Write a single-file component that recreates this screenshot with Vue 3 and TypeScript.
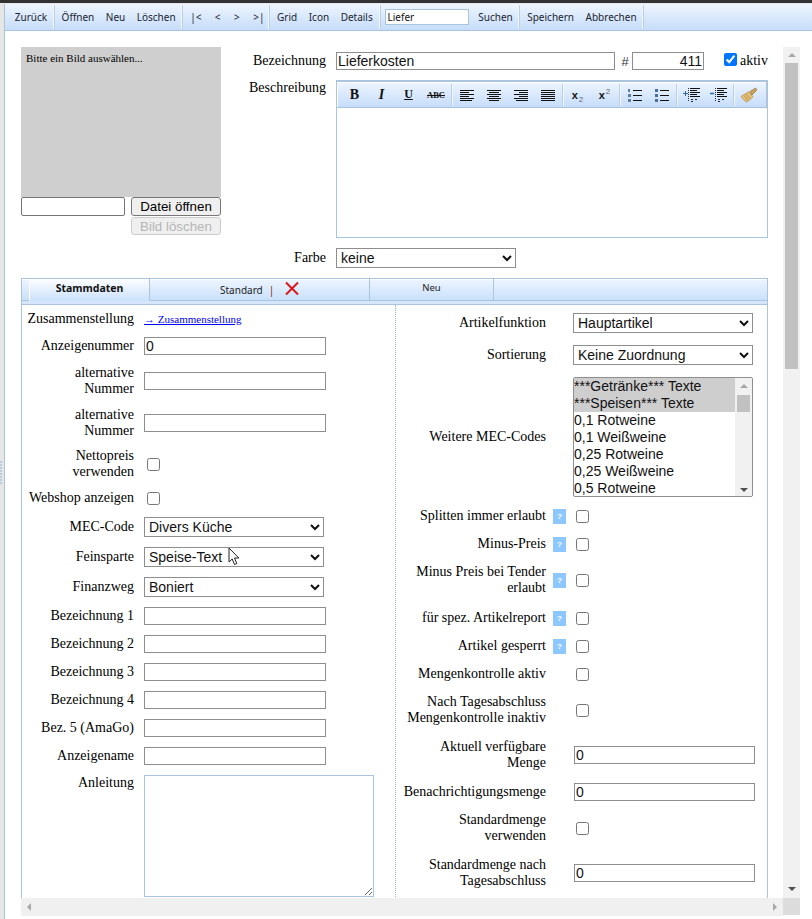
<script setup lang="ts">
interface LeftRow { label: string; kind: string; h: number; value?: string }
interface RightRow { label: string; kind: string; h: number; value?: string; help?: boolean }

const toolbarGroups: string[][] = [
  ['Zurück'],
  ['Öffnen', 'Neu', 'Löschen'],
  ['|<', '<', '>', '>|'],
  ['Grid', 'Icon', 'Details'],
]

const leftRows: LeftRow[] = [
  { label: 'Zusammenstellung', kind: 'link', h: 27 },
  { label: 'Anzeigenummer', kind: 'input', h: 28, value: '0' },
  { label: 'alternative Nummer', kind: 'input', h: 42 },
  { label: 'alternative Nummer', kind: 'input', h: 42 },
  { label: 'Nettopreis verwenden', kind: 'check', h: 40 },
  { label: 'Webshop anzeigen', kind: 'check', h: 28 },
  { label: 'MEC-Code', kind: 'select', h: 30, value: 'Divers Küche' },
  { label: 'Feinsparte', kind: 'select', h: 30, value: 'Speise-Text' },
  { label: 'Finanzweg', kind: 'select', h: 30, value: 'Boniert' },
  { label: 'Bezeichnung 1', kind: 'input', h: 28 },
  { label: 'Bezeichnung 2', kind: 'input', h: 28 },
  { label: 'Bezeichnung 3', kind: 'input', h: 28 },
  { label: 'Bezeichnung 4', kind: 'input', h: 28 },
  { label: 'Bez. 5 (AmaGo)', kind: 'input', h: 28 },
  { label: 'Anzeigename', kind: 'input', h: 28 },
]

const rightRows: RightRow[] = [
  { label: 'Artikelfunktion', kind: 'select', h: 26, value: 'Hauptartikel' },
  { label: 'Sortierung', kind: 'select', h: 38, value: 'Keine Zuordnung' },
  { label: 'Weitere MEC-Codes', kind: 'list', h: 126 },
  { label: 'Splitten immer erlaubt', kind: 'check', h: 32, help: true },
  { label: 'Minus-Preis', kind: 'check', h: 24, help: true },
  { label: 'Minus Preis bei Tender erlaubt', kind: 'check', h: 48, help: true },
  { label: 'für spez. Artikelreport', kind: 'check', h: 28, help: true },
  { label: 'Artikel gesperrt', kind: 'check', h: 28, help: true },
  { label: 'Mengenkontrolle aktiv', kind: 'check', h: 28 },
  { label: 'Nach Tagesabschluss Mengenkontrolle inaktiv', kind: 'check', h: 44 },
  { label: 'Aktuell verfügbare Menge', kind: 'input', h: 46, value: '0' },
  { label: 'Benachrichtigungsmenge', kind: 'input', h: 28, value: '0' },
  { label: 'Standardmenge verwenden', kind: 'check', h: 44 },
  { label: 'Standardmenge nach Tagesabschluss', kind: 'input', h: 46, value: '0' },
]

const listItems = ['***Getränke*** Texte', '***Speisen*** Texte', '0,1 Rotweine', '0,1 Weißweine', '0,25 Rotweine', '0,25 Weißweine', '0,5 Rotweine']
</script>

<template>
  <div class="page">
    <div class="topstrip"></div>
    <div class="shell">
      <div class="rail"><div class="grip"></div></div>
      <main class="main">
        <nav class="toolbar">
          <template v-for="(group, gi) in toolbarGroups" :key="group[0]">
            <span class="group" :class="{ navgroup: gi === 2 }">
              <a v-for="item in group" :key="item" class="tool">{{ item }}</a>
            </span>
            <i class="sep"></i>
          </template>
          <input class="search" value="Liefer" />
          <a class="tool">Suchen</a>
          <i class="sep"></i>
          <a class="tool">Speichern</a>
          <a class="tool">Abbrechen</a>
          <i class="sep"></i>
        </nav>

        <div class="scrollarea">
          <div class="viewrow">
            <div class="content">
              <section class="head">
                <div class="imagecol">
                  <div class="imagebox">Bitte ein Bild auswählen...</div>
                  <div class="filerow">
                    <input class="filename" />
                    <div class="filebtns">
                      <button class="btn">Datei öffnen</button>
                      <button class="btn" disabled>Bild löschen</button>
                    </div>
                  </div>
                </div>
                <div class="headform">
                  <div class="hrow first">
                    <label class="hlabel">Bezeichnung</label>
                    <input class="field name" value="Lieferkosten" />
                    <span class="hash">#</span>
                    <input class="field num" value="411" />
                    <label class="aktiv"><input type="checkbox" class="cb" checked /><span>aktiv</span></label>
                  </div>
                  <div class="hrow second">
                    <label class="hlabel">Beschreibung</label>
                    <div class="editor">
                      <div class="edbar">
                        <span class="ed b">B</span>
                        <span class="ed i">I</span>
                        <span class="ed u">U</span>
                        <span class="ed abc">ABC</span>
                        <i class="edsep"></i>
                        <span class="ed" v-for="(n, a) in 4" :key="a">
                          <svg width="16" height="12" viewBox="0 0 16 12">
                            <path v-if="a===0" d="M1 1.500h14M1 3.500h9M1 5.500h14M1 7.500h9M1 9.500h14M1 11.500h12" stroke="#111" fill="none"/>
                            <path v-if="a===1" d="M1 1.500h14M3 3.500h10M1 5.500h14M3 7.500h10M1 9.500h14M3 11.500h10" stroke="#111" fill="none"/>
                            <path v-if="a===2" d="M1 1.500h14M6 3.500h9M1 5.500h14M6 7.500h9M1 9.500h14M3 11.500h12" stroke="#111" fill="none"/>
                            <path v-if="a===3" d="M1 1.500h14M1 3.500h14M1 5.500h14M1 7.500h14M1 9.500h14M1 11.500h14" stroke="#111" fill="none"/>
                          </svg>
                        </span>
                        <i class="edsep"></i>
                        <span class="ed sc"><b>x</b><sub>2</sub></span>
                        <span class="ed sc"><b>x</b><sup>2</sup></span>
                        <i class="edsep"></i>
                        <span class="ed">
                          <svg width="16" height="14" viewBox="0 0 16 14">
                            <path d="M6 2.500h9M6 7.500h9M6 12.500h9" stroke="#111" fill="none"/>
                            <path d="M1 1h2v3H1zM1 6h3v3H1zM1 11h3v3H1z" fill="#5b7fa6"/>
                          </svg>
                        </span>
                        <span class="ed">
                          <svg width="16" height="14" viewBox="0 0 16 14">
                            <path d="M6 2.500h9M6 7.500h9M6 12.500h9" stroke="#111" fill="none"/>
                            <path d="M1 1h3v3H1zM1 6h3v3H1zM1 11h3v3H1z" fill="#4a6f9c"/>
                          </svg>
                        </span>
                        <i class="edsep"></i>
                        <span class="ed">
                          <svg width="18" height="14" viewBox="0 0 18 14">
                            <path d="M7 .500h10M7 2.500h7M7 4.500h10M7 6.500h7M7 8.500h10" stroke="#111" fill="none"/>
                            <path d="M8 11.500h2M12 11.500h2M8 13.500h2" stroke="#222" fill="none"/>
                            <path d="M0 5.500h5M2.500 3v5" stroke="#2f6aa8" fill="none"/>
                            <path d="M5.500 0v14" stroke="#333" stroke-dasharray="1 1" fill="none"/>
                          </svg>
                        </span>
                        <span class="ed">
                          <svg width="18" height="14" viewBox="0 0 18 14">
                            <path d="M7 .500h10M7 2.500h7M7 4.500h10M7 6.500h7M7 8.500h10" stroke="#111" fill="none"/>
                            <path d="M8 11.500h2M12 11.500h2M8 13.500h2" stroke="#222" fill="none"/>
                            <path d="M0 5.500h4" stroke="#2f6aa8" stroke-width="1.500" fill="none"/>
                            <path d="M5.500 0v14" stroke="#333" stroke-dasharray="1 1" fill="none"/>
                          </svg>
                        </span>
                        <i class="edsep"></i>
                        <span class="ed">
                          <svg width="18" height="16" viewBox="0 0 18 16">
                            <path d="M1 9.500 9 4.500l4 5.500-6 5c-2-.5-4.500-3-6-5.500z" fill="#e2c078" stroke="#b98f45" stroke-width=".7"/>
                            <path d="M10 4.500 15.500 1l1.500 2-5 5z" fill="#c9a35b" stroke="#8c6a2e" stroke-width=".6"/>
                            <path d="M4 8.500l4 5M6 7l4 5" stroke="#a97f3a" stroke-width=".7"/>
                          </svg>
                        </span>
                      </div>
                      <div class="edbody"></div>
                    </div>
                  </div>
                  <div class="hrow third">
                    <label class="hlabel">Farbe</label>
                    <select class="sel color"><option>keine</option></select>
                  </div>
                </div>
              </section>

              <section class="tabs">
                <div class="tabbar">
                  <div class="tab active">Stammdaten</div>
                  <div class="tab std">
                    <span class="stdtext">Standard</span><span class="pipe">|</span>
                    <svg class="del" width="16" height="15" viewBox="0 0 16 15"><path d="M2 1.500 14 13.500M14 1.500 2 13.500" stroke="#d81717" stroke-width="2" fill="none"/></svg>
                  </div>
                  <div class="tab neu">Neu</div>
                </div>
                <div class="tabstrip"></div>
                <div class="panes">
                  <div class="pane leftpane">
                    <div v-for="(r, idx) in leftRows" :key="idx" class="lrow" :style="{ height: r.h + 'px' }">
                      <label class="llabel">{{ r.label }}</label>
                      <a v-if="r.kind==='link'" class="link">→ Zusammenstellung</a>
                      <input v-else-if="r.kind==='input'" class="field lfield" :value="r.value" />
                      <input v-else-if="r.kind==='check'" type="checkbox" class="cb lcb" />
                      <select v-else class="sel lsel"><option>{{ r.value }}</option></select>
                    </div>
                    <div class="anleitung">
                      <label class="llabel top">Anleitung</label>
                      <textarea class="notes"></textarea>
                    </div>
                  </div>
                  <div class="pane rightpane">
                    <div v-for="(r, idx) in rightRows" :key="idx" class="rrow" :style="{ height: r.h + 'px' }">
                      <label class="rlabel">{{ r.label }}</label>
                      <span class="helpslot"><span v-if="r.help" class="help">?</span></span>
                      <select v-if="r.kind==='select'" class="sel rsel"><option>{{ r.value }}</option></select>
                      <input v-else-if="r.kind==='input'" class="field rfield" :value="r.value" />
                      <input v-else-if="r.kind==='check'" type="checkbox" class="cb rcb" />
                      <div v-else class="listbox">
                        <div class="listitems">
                          <div v-for="(it, li) in listItems" :key="it" class="li" :class="{ sel2: li < 2 }">{{ it }}</div>
                        </div>
                        <div class="listscroll">
                          <span class="arrow up small"></span>
                          <span class="lthumb"></span>
                          <span class="arrow down small"></span>
                        </div>
                      </div>
                    </div>
                  </div>
                </div>
              </section>
            </div>
            <div class="vscroll">
              <span class="arrow up"></span>
              <span class="vthumb"></span>
              <span class="arrow down dark"></span>
            </div>
          </div>
          <div class="hscroll">
            <div class="htrack">
              <span class="arrow left"></span>
              <span class="arrow right"></span>
            </div>
            <div class="corner"></div>
          </div>
        </div>
      </main>
    </div>

    <svg class="cursor" width="14" height="20" viewBox="0 0 14 20">
      <path d="M1 1v14l3.200-3 2.300 5.500 2.300-1-2.300-5.500h4.300z" fill="#fff" stroke="#222" stroke-width="1"/>
    </svg>
  </div>
</template>

<style>
html, body { margin: 0; padding: 0; background: #fff; }
</style>

<style scoped>
.page { position: relative; width: 812px; height: 919px; overflow: hidden; background: #fff; display: flex; flex-direction: column; font-family: "Liberation Serif", serif; font-size: 14px; color: #000; }
.topstrip { height: 3px; background: #333; border-bottom: 1px solid #e6e6e6; flex: none; }
.shell { flex: 1; display: flex; min-height: 0; }
.rail { width: 4px; background: #e6e6e6; flex: none; position: relative; }
.grip { position: absolute; left: 0; top: 456px; width: 3px; height: 24px; background: linear-gradient(#e6e6e6 1px, transparent 1px) 0 0 / 3px 3px, linear-gradient(to right, #bccde0 2px, transparent 2px) 0 0 / 3px 3px; }
.main { flex: 1; min-width: 0; border-left: 1px solid #a9c4dc; display: flex; flex-direction: column; }

.toolbar { height: 26px; flex: none; display: flex; align-items: center; padding-left: 4px; background: linear-gradient(#eef5fe, #c6ddfa); border-bottom: 1px solid #a9c4dc; font-family: "Noto Sans", sans-serif; font-size: 10px; color: #1c2430; box-sizing: content-box; }
.group { display: flex; }
.navgroup { margin: 0 -3px 0 -1px; }
.tool { padding: 0 5.750px; white-space: nowrap; }
.navgroup .tool { padding: 0 6.750px; }
.sep { width: 1px; height: 24px; background: #f4f8fe; border-right: 1px solid #b9cfe8; margin: 0 1px 0 0; flex: none; }
.search { width: 84px; height: 16px; box-sizing: border-box; margin: 0 4px 0 3px; border: 1px solid #a9c4dc; padding: 0 2px; font: 10px "Noto Sans", sans-serif; color: #111; outline: none; }

.scrollarea { margin: 16px 12px 0 16px; display: flex; flex-direction: column; flex: none; height: 869px; }
.viewrow { display: flex; height: 851px; flex: none; }
.content { width: 762px; flex: none; overflow: hidden; display: flex; flex-direction: column; }

.head { display: flex; flex: none; }
.imagecol { width: 200px; flex: none; }
.imagebox { height: 150px; background: #cfcfcf; font-size: 11px; padding: 4px 5px; box-sizing: border-box; line-height: 14px; }
.filerow { display: flex; gap: 6px; }
.filename { width: 104px; height: 19px; box-sizing: border-box; border: 1px solid #767676; border-radius: 2px; padding: 0; }
.filebtns { width: 90px; display: flex; flex-direction: column; gap: 1px; }
.btn { height: 19px; width: 90px; padding: 0; box-sizing: border-box; border: 1px solid #767676; border-radius: 3px; background: #efefef; font: 13.330px "Liberation Sans", sans-serif; color: #000; }
.btn:disabled { height: 18px; border-color: #ccc; color: #b5b5b5; }

.headform { width: 547px; flex: none; }
.hrow { display: flex; }
.hrow.first { margin-top: 5px; height: 18px; align-items: center; }
.hrow.second { margin-top: 10px; }
.hrow.third { margin-top: 10px; align-items: center; }
.hlabel { width: 105px; text-align: right; flex: none; margin-right: 10px; font-size: 14px; }
.second .hlabel { line-height: 16px; }
.field { box-sizing: border-box; height: 18px; border: 1px solid #8e8e8e; padding: 0 1px; font: 14px "Liberation Sans", sans-serif; color: #111; outline: none; border-radius: 0; }
.name { width: 279px; }
.hash { width: 17px; padding-left: 3px; box-sizing: border-box; text-align: center; font: 13px "Liberation Sans", sans-serif; color: #333; }
.num { width: 72px; text-align: right; }
.aktiv { display: flex; align-items: center; margin-left: 20px; margin-top: -3px; font-size: 14px; }
.aktiv span { margin-left: 3px; margin-top: 2px; }
.cb { width: 13px; height: 13px; margin: 0; flex: none; }

.editor { width: 432px; height: 158px; box-sizing: border-box; border: 1px solid #a9c4dc; border-top-width: 2px; display: flex; flex-direction: column; flex: none; }
.edbar { height: 25px; flex: none; display: flex; align-items: center; padding-left: 4px; background: linear-gradient(#eef5fe, #c6ddfa); border-bottom: 1px solid #a9c4dc; border-right: 1px solid #a9c4dc; box-shadow: inset 1px 1px 0 #fff; box-sizing: content-box; }
.ed { width: 27px; height: 20px; flex: none; display: flex; align-items: center; justify-content: center; color: #111; }
.b { font: bold 14px "Liberation Serif", serif; }
.i { font: italic bold 14px "Liberation Serif", serif; }
.u { font: bold 12px "Liberation Serif", serif; text-decoration: underline; }
.ed.abc { width: 28px; font: bold 8.500px "Liberation Serif", serif; text-decoration: line-through; }
.ed.sc { display: block; text-align: center; font: 11px/20px "Liberation Sans", sans-serif; }
.sc sub, .sc sup { font-size: 8px; line-height: 0; color: #667; margin-left: 1px; }
.edsep { width: 1px; height: 22px; background: #b9cfe8; border-right: 1px solid #f4f8fe; flex: none; margin: 0 0 0 1px; }
.edbody { flex: 1; background: #fff; }

.sel { height: 20px; box-sizing: border-box; border: 1px solid #8e8e8e; background: #fff; font: 14px "Liberation Sans", sans-serif; color: #111; border-radius: 0; }
.color { width: 180px; }

.tabs { margin-top: 10px; width: 747px; flex: 1; min-height: 0; border: 1px solid #a9c4dc; border-bottom: 0; box-sizing: border-box; display: flex; flex-direction: column; }
.tabbar { height: 21px; flex: none; display: flex; padding-left: 7px; background: linear-gradient(#eef5fe, #c9e0fb); border-bottom: 1px solid #a9c4dc; box-shadow: inset 0 1px 0 #fff; box-sizing: content-box; font-family: "Noto Sans", sans-serif; font-size: 10px; color: #222; }
.tab { display: flex; align-items: center; justify-content: center; box-sizing: border-box; height: 21px; }
.tab.active { width: 121px; height: 22px; position: relative; font-weight: 700; font-size: 10.500px; padding-bottom: 4px; color: #111; background: linear-gradient(#fdfeff, #cde2fb); border-left: 1px solid #fff; border-right: 1px solid #a9c4dc; border-bottom: 1px solid #cde2fb; }
.tab.std { width: 220px; border-right: 1px solid #a9c4dc; justify-content: flex-start; padding-left: 70px; }
.stdtext { margin-right: 6px; }
.pipe { color: #7a2a1a; margin-right: 10px; }
.del { margin-top: -2px; }
.tab.neu { width: 124px; border-right: 1px solid #a9c4dc; font-size: 9.500px; padding-bottom: 4px; }
.tabstrip { height: 3px; flex: none; background: #d5e6fa; border-bottom: 1px solid #a9c4dc; }

.panes { flex: 1; min-height: 0; display: flex; }
.pane { box-sizing: border-box; }
.leftpane { width: 374px; border-right: 1px dotted #9fb4c9; flex: none; height: 596px; }
.rightpane { flex: 1; padding-top: 5px; }

.lrow { display: flex; align-items: center; }
.llabel { width: 112px; flex: none; text-align: right; margin-right: 10px; line-height: 16px; }
.lfield { width: 182px; }
.lsel { width: 180px; }
.lcb { margin-left: 3px; }
.link { font-size: 11px; color: #00f; text-decoration: underline; margin-top: 1px; }
.anleitung { display: flex; align-items: flex-start; padding-top: 5px; }
.notes { width: 230px; height: 122px; box-sizing: border-box; border: 1px solid #a9c4dc; padding: 2px; margin: 0; outline: none; display: block; }

.rrow { display: flex; align-items: center; }
.rlabel { width: 150px; padding-left: 5px; box-sizing: border-box; flex: none; text-align: right; line-height: 16px; }
.helpslot { width: 27px; flex: none; display: flex; padding-left: 7px; box-sizing: border-box; }
.help { width: 13px; height: 15px; background: #8cc8ff; color: #fff; font: bold 8px/15px "Liberation Sans", sans-serif; text-align: center; }
.rsel { width: 180px; }
.rfield { width: 181px; margin-left: 1px; }
.rcb { margin-left: 3px; }
.listbox { width: 180px; height: 120px; box-sizing: border-box; border: 1px solid #8e8e8e; border-radius: 2px; display: flex; overflow: hidden; }
.listitems { flex: 1; font: 14px/17px "Liberation Sans", sans-serif; color: #111; }
.li { padding-left: 0; height: 17px; white-space: nowrap; }
.li.sel2 { background: #cecece; }
.listscroll { width: 17px; flex: none; background: #f1f1f1; display: flex; flex-direction: column; align-items: center; }
.lthumb { width: 13px; height: 17px; background: #c1c1c1; margin-top: 7px; }
.listscroll .down { margin-top: auto; margin-bottom: 4px; }

.arrow { display: block; width: 0; height: 0; flex: none; }
.arrow.up { border-left: 4px solid transparent; border-right: 4px solid transparent; border-bottom: 4px solid #a8a8a8; margin-top: 6px; }
.arrow.down { border-left: 4px solid transparent; border-right: 4px solid transparent; border-top: 4px solid #505050; }
.arrow.down.dark { border-top-color: #505050; }
.listscroll .up { margin-top: 6px; }
.arrow.left { border-top: 4px solid transparent; border-bottom: 4px solid transparent; border-right: 4px solid #a8a8a8; }
.arrow.right { border-top: 4px solid transparent; border-bottom: 4px solid transparent; border-left: 4px solid #a8a8a8; }

.vscroll { width: 17px; flex: none; margin-left: 0; background: #f1f1f1; display: flex; flex-direction: column; align-items: center; }
.vthumb { width: 13px; height: 306px; background: #c1c1c1; margin-top: 6px; }
.vscroll .down { margin-top: auto; margin-bottom: 7px; }

.hscroll { height: 18px; display: flex; flex: none; }
.htrack { flex: 1; background: #f0f0f0; display: flex; align-items: center; justify-content: space-between; padding: 0 6px; }
.corner { width: 17px; height: 17px; background: #dcdcdc; }

.cursor { position: absolute; left: 228px; top: 547px; }
</style>
